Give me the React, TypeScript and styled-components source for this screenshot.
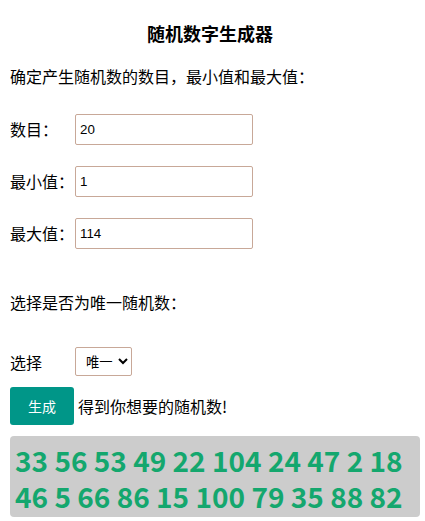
import React, { useState } from 'react';
import styled, { createGlobalStyle } from 'styled-components';

const GlobalStyle = createGlobalStyle`
  body {
    margin: 0;
    padding: 10px 5px 10px 10px;
    font-family: "Noto Sans CJK SC", "Noto Sans", sans-serif;
    font-size: 16px;
    color: #000;
    background: #fff;
  }
`;

const Page = styled.div`
  display: flex;
  flex-direction: column;
`;

const Title = styled.h1`
  text-align: center;
  font-size: 18px;
  font-weight: bold;
  margin: 10px 10px 17px 0;
  line-height: 26px;
`;

const Intro = styled.p`
  margin: 0 0 14px;
  line-height: 26px;
`;

const Row = styled.div`
  display: flex;
  align-items: center;
  height: 52px;
`;

const Label = styled.label`
  width: 65px;
  line-height: 24px;
`;

const Input = styled.input`
  width: 178px;
  height: 31px;
  box-sizing: border-box;
  padding: 1px 4px;
  font-family: "Liberation Sans", Arial, sans-serif;
  font-size: 13.33px;
  border: 1px solid #c8a898;
  border-radius: 2px;
`;

const Question = styled.p`
  margin: 30px 0 32px;
  line-height: 26px;
`;

const SelectRow = styled.div`
  display: flex;
  align-items: center;
  margin-bottom: 11px;
`;

const Select = styled.select`
  height: 29px;
  width: 57px;
  font-family: "Noto Sans CJK SC", sans-serif;
  font-size: 13.33px;
  border: 1px solid #c8a898;
  border-radius: 2px;
  background: #fff;
  padding: 0 2px 0 6px;
`;

const ActionRow = styled.div`
  display: flex;
  align-items: center;
  gap: 4px;
  margin-bottom: 11px;
`;

const Button = styled.button`
  width: 64px;
  height: 38px;
  background: #009688;
  color: #fff;
  border: none;
  border-radius: 3px;
  font-family: "Noto Sans CJK SC", sans-serif;
  font-size: 14px;
  cursor: pointer;
`;

const Output = styled.div`
  background: #cccccc;
  border-radius: 4px;
  padding: 6px 5px 3px;
  color: #14a76e;
  font-size: 28px;
  font-weight: bold;
  line-height: 36px;
`;

const App: React.FC = () => {
  const [count, setCount] = useState('20');
  const [min, setMin] = useState('1');
  const [max, setMax] = useState('114');
  const [unique, setUnique] = useState('unique');
  const [numbers, setNumbers] = useState<number[]>([
    33, 56, 53, 49, 22, 104, 24, 47, 2, 18, 46, 5, 66, 86, 15, 100, 79, 35, 88, 82,
  ]);

  const generate = () => {
    const n = parseInt(count, 10) || 0;
    const lo = parseInt(min, 10) || 0;
    const hi = parseInt(max, 10) || 0;
    const out: number[] = [];
    while (out.length < n) {
      const v = Math.floor(Math.random() * (hi - lo + 1)) + lo;
      if (unique === 'unique' && out.includes(v)) {
        if (hi - lo + 1 <= out.length) break;
        continue;
      }
      out.push(v);
    }
    setNumbers(out);
  };

  return (
    <Page>
      <GlobalStyle />
      <Title>随机数字生成器</Title>
      <Intro>确定产生随机数的数目，最小值和最大值：</Intro>
      <Row>
        <Label htmlFor="count">数目：</Label>
        <Input id="count" value={count} onChange={(e) => setCount(e.target.value)} />
      </Row>
      <Row>
        <Label htmlFor="min">最小值：</Label>
        <Input id="min" value={min} onChange={(e) => setMin(e.target.value)} />
      </Row>
      <Row>
        <Label htmlFor="max">最大值：</Label>
        <Input id="max" value={max} onChange={(e) => setMax(e.target.value)} />
      </Row>
      <Question>选择是否为唯一随机数：</Question>
      <SelectRow>
        <Label htmlFor="unique">选择</Label>
        <Select id="unique" value={unique} onChange={(e) => setUnique(e.target.value)}>
          <option value="unique">唯一</option>
          <option value="repeat">重复</option>
        </Select>
      </SelectRow>
      <ActionRow>
        <Button onClick={generate}>生成</Button>
        <span>得到你想要的随机数!</span>
      </ActionRow>
      <Output>{numbers.join(' ')}</Output>
    </Page>
  );
};

export default App;
